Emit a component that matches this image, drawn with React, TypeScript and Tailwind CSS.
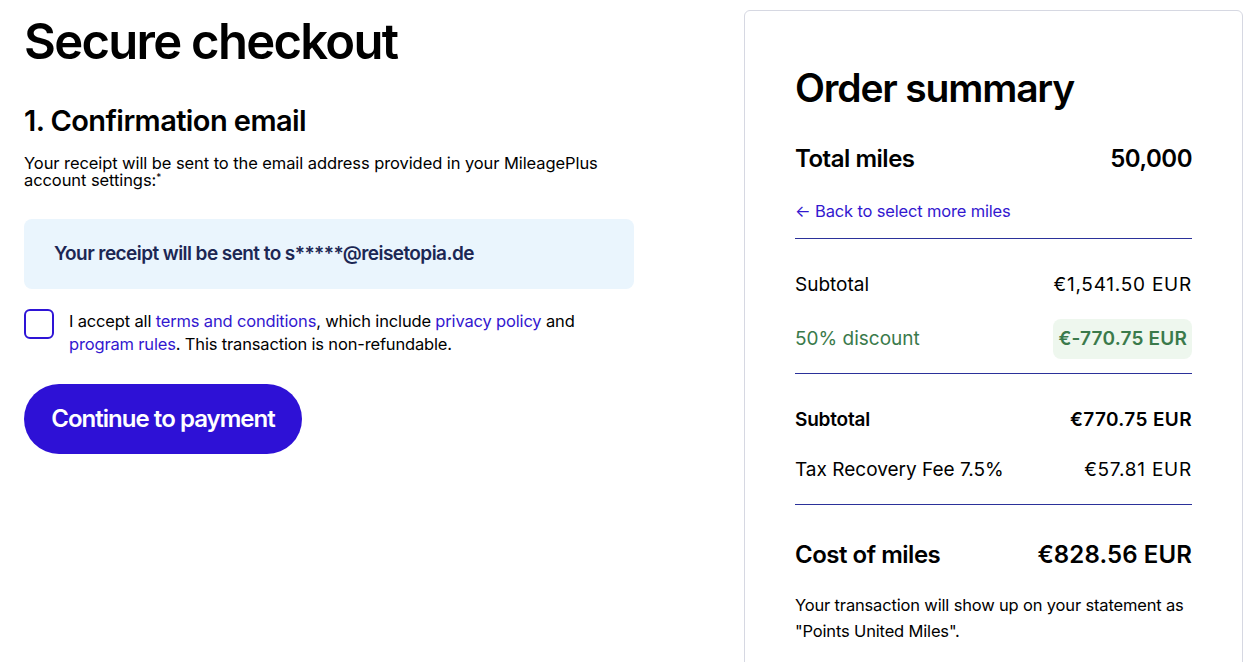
export default function App() {
  return (
    <div
      className="flex w-[1255px] h-[662px] overflow-hidden bg-white text-black"
      style={{ fontFamily: "Inter, 'Liberation Sans', sans-serif" }}
    >
      {/* left column */}
      <div className="w-[610px] ml-[24px] pt-[14px]">
        <h1 className="text-[49px] leading-[56px] font-semibold tracking-[-0.035em]">Secure checkout</h1>

        <h2 className="mt-[34px] text-[29px] leading-[34px] font-semibold tracking-[-0.02em]">1. Confirmation email</h2>
        <p className="mt-[17px] text-[16.5px] leading-[17px] tracking-[-0.005em]">
          Your receipt will be sent to the email address provided in your MileagePlus
          <br />
          account settings:<sup className="text-[10px]">*</sup>
        </p>

        <div className="mt-[30px] h-[70px] rounded-lg bg-[#eaf5fd] flex items-center pl-[30px]">
          <span className="text-[19px] font-semibold text-[#1c2754] tracking-[-0.03em]">
            Your receipt will be sent to s*****@reisetopia.de
          </span>
        </div>

        <div className="mt-[20px] flex gap-[15px]">
          <div className="w-[30px] h-[30px] shrink-0 rounded-md border-2 border-[#2e14d6]" />
          <p className="text-[16.5px] leading-[23px] tracking-[-0.01em] pt-[1px]">
            I accept all <a className="text-[#3318cf]">terms and conditions</a>, which include{" "}
            <a className="text-[#3318cf]">privacy policy</a> and
            <br />
            <a className="text-[#3318cf]">program rules</a>. This transaction is non-refundable.
          </p>
        </div>

        <button className="mt-[28px] h-[70px] w-[278px] rounded-full bg-[#2e11d6] text-white text-[24px] font-semibold tracking-[-0.04em]">
          Continue to payment
        </button>
      </div>

      {/* order summary */}
      <div className="ml-auto mr-[12px] mt-[10px] w-[499px] h-[680px] rounded-md border border-[#d6d8e2] px-[50px] pt-[55px]">
        <h2 className="text-[39px] leading-[44px] font-semibold tracking-[-0.03em]">Order summary</h2>

        <div className="mt-[31px] flex justify-between items-center text-[24px] font-semibold tracking-[-0.02em]">
          <span>Total miles</span>
          <span>50,000</span>
        </div>
        <a className="block mt-[22px] text-[16.5px] text-[#3318cf] tracking-[-0.01em]">← Back to select more miles</a>

        <div className="mt-[14px] border-t border-[#2b319a]" />

        <div className="mt-[32px] flex justify-between items-center text-[19px]">
          <span>Subtotal</span>
          <span className="tracking-[0.04em]">€1,541.50 EUR</span>
        </div>
        <div className="mt-[20px] flex justify-between items-center text-[19px] text-[#3a7a4b]">
          <span>50% discount</span>
          <span className="rounded-lg bg-[#eef7ee] px-[5px] h-[40px] flex items-center font-semibold tracking-[0.01em]">
            €-770.75 EUR
          </span>
        </div>

        <div className="mt-[14px] border-t border-[#2b319a]" />

        <div className="mt-[32px] flex justify-between items-center text-[19px] font-semibold">
          <span className="tracking-[-0.01em]">Subtotal</span>
          <span className="tracking-[0.02em]">€770.75 EUR</span>
        </div>
        <div className="mt-[21px] flex justify-between items-center text-[19px]">
          <span>Tax Recovery Fee 7.5%</span>
          <span className="tracking-[0.04em]">€57.81 EUR</span>
        </div>

        <div className="mt-[20px] border-t border-[#2b319a]" />

        <div className="mt-[32px] flex justify-between items-center text-[24px] font-semibold">
          <span className="tracking-[-0.02em]">Cost of miles</span>
          <span className="tracking-[0.005em]">€828.56 EUR</span>
        </div>
        <p className="mt-[19px] text-[16.5px] leading-[26px] tracking-[-0.01em]">
          Your transaction will show up on your statement as
          <br />
          "Points United Miles".
        </p>
      </div>
    </div>
  );
}
